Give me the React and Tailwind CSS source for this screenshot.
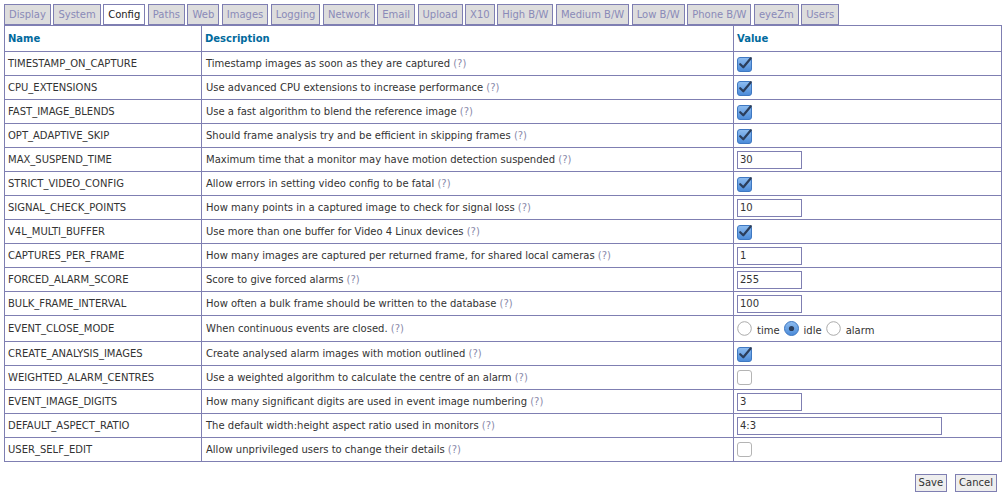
import { useState } from 'react'

const TABS = [
  'Display', 'System', 'Config', 'Paths', 'Web', 'Images', 'Logging', 'Network', 'Email',
  'Upload', 'X10', 'High B/W', 'Medium B/W', 'Low B/W', 'Phone B/W', 'eyeZm', 'Users',
]

const ROWS = [
  { name: 'TIMESTAMP_ON_CAPTURE', desc: 'Timestamp images as soon as they are captured', type: 'check', value: true },
  { name: 'CPU_EXTENSIONS', desc: 'Use advanced CPU extensions to increase performance', type: 'check', value: true },
  { name: 'FAST_IMAGE_BLENDS', desc: 'Use a fast algorithm to blend the reference image', type: 'check', value: true },
  { name: 'OPT_ADAPTIVE_SKIP', desc: 'Should frame analysis try and be efficient in skipping frames', type: 'check', value: true },
  { name: 'MAX_SUSPEND_TIME', desc: 'Maximum time that a monitor may have motion detection suspended', type: 'text', value: '30' },
  { name: 'STRICT_VIDEO_CONFIG', desc: 'Allow errors in setting video config to be fatal', type: 'check', value: true },
  { name: 'SIGNAL_CHECK_POINTS', desc: 'How many points in a captured image to check for signal loss', type: 'text', value: '10' },
  { name: 'V4L_MULTI_BUFFER', desc: 'Use more than one buffer for Video 4 Linux devices', type: 'check', value: true },
  { name: 'CAPTURES_PER_FRAME', desc: 'How many images are captured per returned frame, for shared local cameras', type: 'text', value: '1' },
  { name: 'FORCED_ALARM_SCORE', desc: 'Score to give forced alarms', type: 'text', value: '255' },
  { name: 'BULK_FRAME_INTERVAL', desc: 'How often a bulk frame should be written to the database', type: 'text', value: '100' },
  { name: 'EVENT_CLOSE_MODE', desc: 'When continuous events are closed.', type: 'radio', value: 'idle' },
  { name: 'CREATE_ANALYSIS_IMAGES', desc: 'Create analysed alarm images with motion outlined', type: 'check', value: true },
  { name: 'WEIGHTED_ALARM_CENTRES', desc: 'Use a weighted algorithm to calculate the centre of an alarm', type: 'check', value: false },
  { name: 'EVENT_IMAGE_DIGITS', desc: 'How many significant digits are used in event image numbering', type: 'text', value: '3' },
  { name: 'DEFAULT_ASPECT_RATIO', desc: 'The default width:height aspect ratio used in monitors', type: 'wide', value: '4:3' },
  { name: 'USER_SELF_EDIT', desc: 'Allow unprivileged users to change their details', type: 'check', value: false },
]

function CheckBox({ checked }) {
  if (!checked) {
    return (
      <svg width="16" height="16" viewBox="0 0 16 16" className="block">
        <rect x="0.5" y="0.5" width="14" height="14" rx="2.5" fill="#fff" stroke="#b4b4b4" />
      </svg>
    )
  }
  return (
    <svg width="16" height="16" viewBox="0 0 16 16" className="block">
      <defs>
        <linearGradient id="cb" x1="0" y1="0" x2="0" y2="1">
          <stop offset="0" stopColor="#8fbdf0" />
          <stop offset="1" stopColor="#4a8ad8" />
        </linearGradient>
      </defs>
      <rect x="0.5" y="1.5" width="14" height="14" rx="2.5" fill="url(#cb)" stroke="#3f78c2" />
      <path d="M3.2 8.2 L6.3 11.3 L13.8 2.2" fill="none" stroke="#2b3e5c" strokeWidth="2.2" strokeLinecap="round" strokeLinejoin="round" />
    </svg>
  )
}

function Radio({ checked }) {
  return (
    <svg width="15" height="15" viewBox="0 0 15 15" className="block">
      <defs>
        <linearGradient id="rb" x1="0" y1="0" x2="0" y2="1">
          <stop offset="0" stopColor="#8fbdf0" />
          <stop offset="1" stopColor="#4a8ad8" />
        </linearGradient>
      </defs>
      {checked ? (
        <>
          <circle cx="7.5" cy="7.5" r="7" fill="url(#rb)" stroke="#3f78c2" />
          <circle cx="7.5" cy="7.5" r="2.6" fill="#2b3e5c" />
        </>
      ) : (
        <circle cx="7.5" cy="7.5" r="6.8" fill="#fff" stroke="#ababab" />
      )}
    </svg>
  )
}

function ValueCell({ row }) {
  if (row.type === 'check') return <CheckBox checked={row.value} />
  if (row.type === 'text' || row.type === 'wide') {
    return (
      <input
        defaultValue={row.value}
        className={`block h-[18px] border border-[#7f7fb2] bg-white px-[2px] text-[10px] text-[#333] outline-none ${
          row.type === 'wide' ? 'w-[205px]' : 'w-[65px]'
        }`}
      />
    )
  }
  return (
    <div className="flex items-center text-[10px] text-[#333]">
      {['time', 'idle', 'alarm'].map((opt) => (
        <label key={opt} className="mr-[4px] flex items-center gap-[5px]">
          <Radio checked={row.value === opt} />
          <span className="mt-[3px]">{opt}</span>
        </label>
      ))}
    </div>
  )
}

export default function App() {
  const [active] = useState('Config')

  return (
    <div className="min-h-[495px] bg-white px-[4px] pt-[4px] font-['DejaVu_Sans','Verdana',sans-serif] text-[10px] text-[#333]">
      <div className="flex h-[21px] gap-[2.5px]">
        {TABS.map((tab) => (
          <div
            key={tab}
            className={`flex h-[21px] items-center border border-[#7f7fb2] px-[4px] ${
              tab === active ? 'bg-white text-[#222]' : 'bg-[#dddddd] text-[#8a8ab8]'
            }`}
          >
            {tab}
          </div>
        ))}
      </div>

      <table className="w-[997px] table-fixed border-collapse">
        <colgroup>
          <col className="w-[197px]" />
          <col className="w-[532px]" />
          <col className="w-[268px]" />
        </colgroup>
        <thead>
          <tr className="h-[26px]">
            {['Name', 'Description', 'Value'].map((h) => (
              <th key={h} className="border border-[#7f7fb2] px-[3px] text-left font-bold text-[#016a9d]">
                {h}
              </th>
            ))}
          </tr>
        </thead>
        <tbody>
          {ROWS.map((row) => (
            <tr
              key={row.name}
              className={row.type === 'radio' ? 'h-[26px]' : 'h-[24px]'}
            >
              <td className="border border-[#7f7fb2] px-[3px] py-0 align-middle">{row.name}</td>
              <td className="border border-[#7f7fb2] px-[4px] py-0 align-middle">
                {row.desc} <span className="text-[#8a8aaa]">(?)</span>
              </td>
              <td className="border border-[#7f7fb2] px-[3px] py-0 align-middle">
                <ValueCell row={row} />
              </td>
            </tr>
          ))}
        </tbody>
      </table>

      <div className="mt-[12px] flex justify-end gap-[8px] pr-[7px]">
        <button className="h-[18px] border border-[#7f7fb2] bg-[#eeeeee] px-[3px] text-[10px] leading-none text-[#333]">
          Save
        </button>
        <button className="h-[18px] border border-[#7f7fb2] bg-[#eeeeee] px-[3px] text-[10px] leading-none text-[#333]">
          Cancel
        </button>
      </div>
    </div>
  )
}
